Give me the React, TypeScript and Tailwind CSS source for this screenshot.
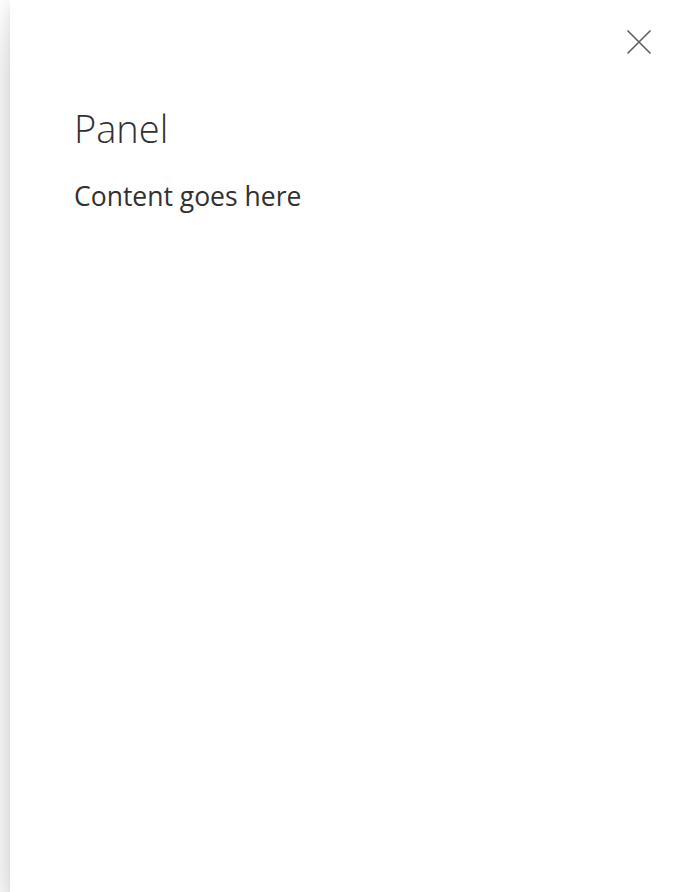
import React from "react";

export default function App() {
  return (
    <div className="w-[680px] h-[892px] bg-white overflow-hidden flex" style={{ fontFamily: '"Open Sans", "Noto Sans", sans-serif' }}>
      <div className="ml-[10px] flex-1 bg-white shadow-[0_25.6px_57.6px_0_rgba(0,0,0,0.16),0_4.8px_14.4px_0_rgba(0,0,0,0.1)] flex flex-col">
        <div className="flex justify-end pt-[24px] pr-[23px]">
          <button className="w-[36px] h-[36px] flex items-center justify-center" aria-label="Close">
            <svg width="26" height="26" viewBox="0 0 26 26" fill="none">
              <path d="M1.5 1.5 L24.5 24.5 M24.5 1.5 L1.5 24.5" stroke="#605e5c" strokeWidth="1.6" />
            </svg>
          </button>
        </div>
        <div className="pl-[64px] pr-[32px] mt-[44px]">
          <h1 className="text-[38px] leading-[48px] font-light text-[#323130]">Panel</h1>
          <p className="mt-[27px] text-[26.5px] leading-[34px] text-[#323130]">Content goes here</p>
        </div>
      </div>
    </div>
  );
}
